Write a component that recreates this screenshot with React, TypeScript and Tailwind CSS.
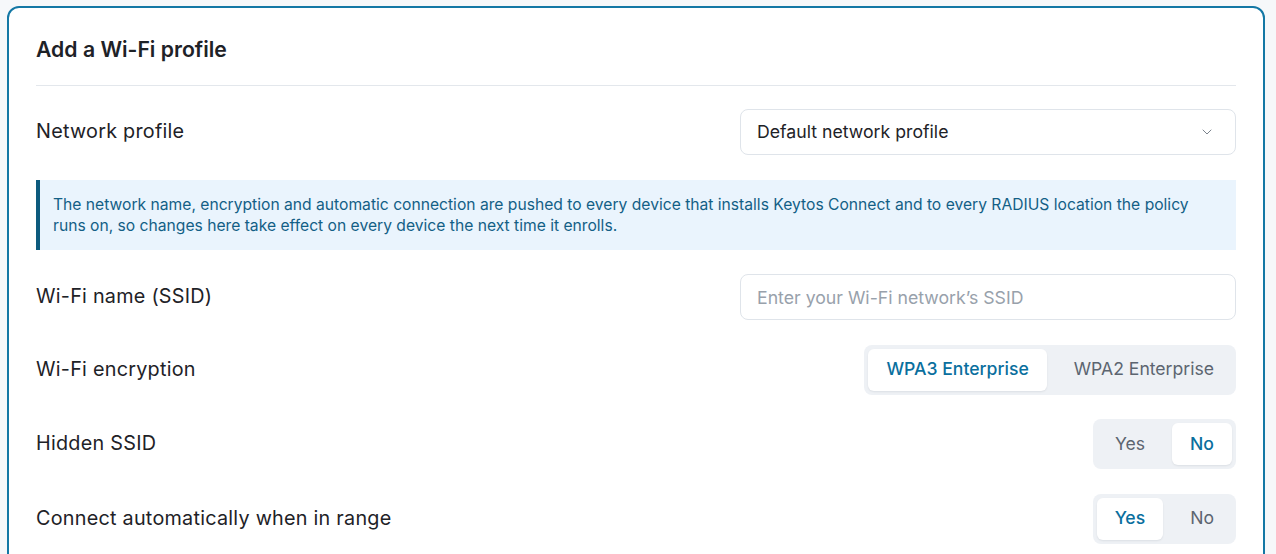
import { useState } from "react";
import { ChevronDown } from "lucide-react";

const font = { fontFamily: "Inter, 'Noto Sans', sans-serif" };

function Segmented({
  options,
  value,
  onChange,
}: {
  options: string[];
  value: string;
  onChange: (v: string) => void;
}) {
  return (
    <div className="flex h-[50px] items-stretch gap-[9px] rounded-lg bg-[#eef1f5] p-1">
      {options.map((opt) => {
        const active = opt === value;
        return (
          <button
            key={opt}
            type="button"
            onClick={() => onChange(opt)}
            className={
              active
                ? "rounded-md bg-white px-[18px] text-[17.6px] font-medium text-[#0a6f9e] shadow-[0_1px_2px_rgba(15,23,42,0.08)]"
                : "rounded-md px-[18px] text-[17.6px] text-[#5c6570]"
            }
          >
            {opt}
          </button>
        );
      })}
    </div>
  );
}

function Row({ label, children }: { label: string; children: React.ReactNode }) {
  return (
    <div className="flex items-center justify-between">
      <span className="text-[19.8px] tracking-[0.25px] text-[#1e2227]">{label}</span>
      {children}
    </div>
  );
}

export default function App() {
  const [encryption, setEncryption] = useState("WPA3 Enterprise");
  const [hidden, setHidden] = useState("No");
  const [autoConnect, setAutoConnect] = useState("Yes");

  return (
    <div className="min-h-screen bg-[#f6f8fa] pt-[6px]" style={font}>
      <div className="ml-[7px] h-[600px] w-[1258px] rounded-[12px] border-2 border-[#1478a5] bg-white px-[27px] pt-7">
        <h2 className="text-[21.2px] font-semibold leading-[26px] text-[#1e2227]">Add a Wi-Fi profile</h2>
        <div className="mt-[23px] border-t border-[#e3e7ec]" />

        <div className="mt-[23px] flex flex-col gap-[24.5px]">
          <Row label="Network profile">
            <button
              type="button"
              className="flex h-[46px] w-[496px] items-center justify-between rounded-lg border border-[#dfe4ea] bg-white pl-4 pr-5 text-[17.7px] text-[#1e2227]"
            >
              Default network profile
              <ChevronDown size={16} strokeWidth={1.5} className="text-[#7b838d]" />
            </button>
          </Row>

          <div className="border-l-4 border-[#0d5b7e] bg-[#eaf4fd] py-[14px] pl-[13px] pr-6 text-[15.65px] leading-[21px] text-[#135f86]">
            The network name, encryption and automatic connection are pushed to every device that installs Keytos Connect
            and to every RADIUS location the policy runs on, so changes here take effect on every device the next time it
            enrolls.
          </div>

          <Row label="Wi-Fi name (SSID)">
            <input
              placeholder="Enter your Wi-Fi network’s SSID"
              className="h-[46px] w-[496px] rounded-lg border border-[#dfe4ea] bg-white px-4 text-[17.7px] text-[#1e2227] outline-none placeholder:text-[#98a1ab]"
            />
          </Row>

          <Row label="Wi-Fi encryption">
            <Segmented options={["WPA3 Enterprise", "WPA2 Enterprise"]} value={encryption} onChange={setEncryption} />
          </Row>

          <Row label="Hidden SSID">
            <Segmented options={["Yes", "No"]} value={hidden} onChange={setHidden} />
          </Row>

          <Row label="Connect automatically when in range">
            <Segmented options={["Yes", "No"]} value={autoConnect} onChange={setAutoConnect} />
          </Row>
        </div>
      </div>
    </div>
  );
}
